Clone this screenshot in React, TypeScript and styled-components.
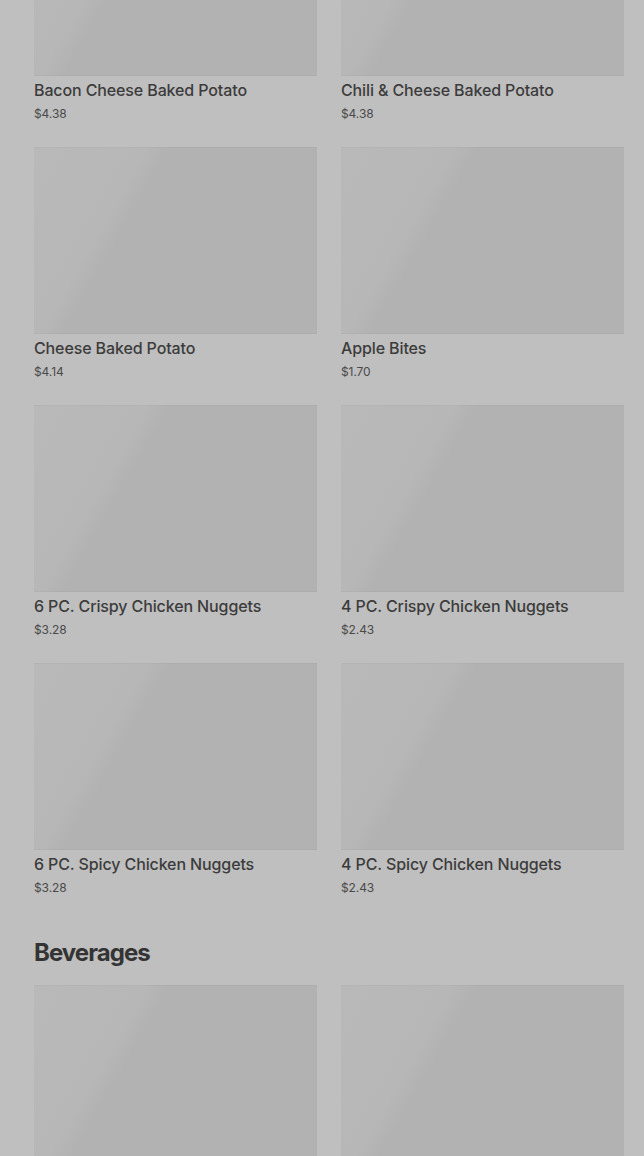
import React from 'react';
import styled, { createGlobalStyle } from 'styled-components';

const GlobalStyle = createGlobalStyle`
  html, body {
    margin: 0;
    padding: 0;
    background: #bfbfbf;
    overflow: hidden;
  }
  body {
    font-family: Inter, 'Noto Sans', Arial, sans-serif;
  }
`;

const Page = styled.div`
  width: 644px;
  height: 1156px;
  overflow: hidden;
  background: #bfbfbf;
`;

const Scroller = styled.div`
  margin-top: -111px;
  padding: 0 20px 0 34px;
`;

const Grid = styled.div`
  display: grid;
  grid-template-columns: 283px 283px;
  column-gap: 24px;
  row-gap: 21px;
`;

const Card = styled.div`
  display: flex;
  flex-direction: column;
`;

const Thumb = styled.div`
  height: 187px;
  background: linear-gradient(120deg, #b9b9b9 0%, #b7b7b7 29%, #b2b2b2 35%, #b2b2b2 100%);
  box-shadow: inset 0 1px 0 rgba(0, 0, 0, 0.025), inset 0 -1px 0 rgba(0, 0, 0, 0.025);
`;

const Title = styled.div`
  margin-top: 2px;
  font-size: 16px;
  line-height: 24px;
  font-weight: 500;
  letter-spacing: -0.12px;
  color: #3c3c3c;
  white-space: nowrap;
`;

const Price = styled.div`
  font-size: 12px;
  line-height: 24px;
  letter-spacing: -0.1px;
  color: #4a4a4a;
`;

const SectionTitle = styled.h2`
  margin: 37px 0 16px;
  font-size: 24px;
  line-height: 32px;
  font-weight: 700;
  letter-spacing: -0.95px;
  color: #343434;
`;

type Item = { name: string; price: string };

const sides: Item[] = [
  { name: 'Bacon Cheese Baked Potato', price: '$4.38' },
  { name: 'Chili & Cheese Baked Potato', price: '$4.38' },
  { name: 'Cheese Baked Potato', price: '$4.14' },
  { name: 'Apple Bites', price: '$1.70' },
  { name: '6 PC. Crispy Chicken Nuggets', price: '$3.28' },
  { name: '4 PC. Crispy Chicken Nuggets', price: '$2.43' },
  { name: '6 PC. Spicy Chicken Nuggets', price: '$3.28' },
  { name: '4 PC. Spicy Chicken Nuggets', price: '$2.43' },
];

// beverage cards: only the top of the pictures is in view
const beverages = ['cola', 'lemonade'];

function MenuCard({ item }: { item: Item }) {
  return (
    <Card>
      <Thumb />
      <Title>{item.name}</Title>
      <Price>{item.price}</Price>
    </Card>
  );
}

export default function App() {
  return (
    <Page>
      <GlobalStyle />
      <Scroller>
        <Grid>
          {sides.map((item) => (
            <MenuCard key={item.name} item={item} />
          ))}
        </Grid>
        <SectionTitle>Beverages</SectionTitle>
        <Grid>
          {beverages.map((id) => (
            <Card key={id}>
              <Thumb />
            </Card>
          ))}
        </Grid>
      </Scroller>
    </Page>
  );
}
